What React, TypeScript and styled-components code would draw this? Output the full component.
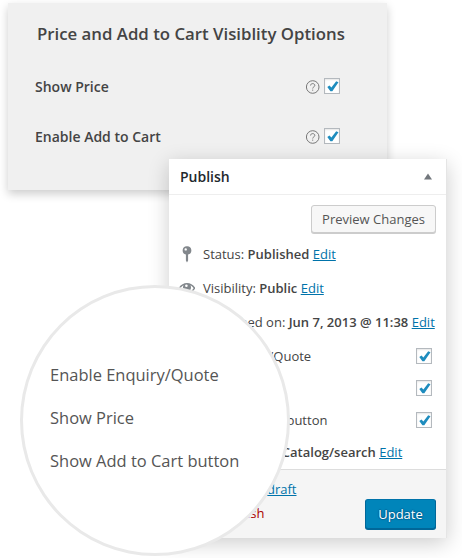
import React from 'react';
import styled, { createGlobalStyle } from 'styled-components';

const GlobalStyle = createGlobalStyle`
  * { box-sizing: border-box; }
  body {
    margin: 0;
    background: #fff;
    font-family: 'Open Sans', 'Noto Sans', sans-serif;
    font-size: 13px;
    color: #444;
  }
`;

const Stage = styled.main`
  position: relative;
  width: 462px;
  height: 558px;
  overflow: hidden;
  padding: 3px 0 0 8px;
`;

const OptionsCard = styled.section`
  width: 379px;
  height: 187px;
  padding: 19px 47px 0 27px;
  background: #f0f0f0;
  box-shadow: 0 4px 9px rgba(0, 0, 0, 0.2);
`;

const OptionsTitle = styled.h2`
  margin: 0 0 28px 2px;
  font-size: 16.8px;
  line-height: 24px;
  font-weight: 600;
  white-space: nowrap;
`;

const OptionRow = styled.div`
  display: flex;
  align-items: center;
  height: 24px;
  margin-bottom: 26px;
  font-size: 14px;
  font-weight: 600;
`;

const HelpIcon = styled.svg`
  width: 14px;
  height: 14px;
  margin: 1px 4px 0 auto;
`;

const Box = styled.span`
  display: flex;
  flex: none;
  width: 16px;
  height: 16px;
  border: 1px solid #b4b9be;
  background: #fff;
  box-shadow: inset 0 1px 2px rgba(0, 0, 0, 0.1);
`;

const PublishCard = styled.section`
  position: absolute;
  left: 169px;
  top: 159px;
  width: 278px;
  height: 379px;
  display: flex;
  flex-direction: column;
  background: #fff;
  border-right: 1px solid #e5e5e5;
  box-shadow: 0 5px 20px rgba(0, 0, 0, 0.2);
`;

const CardHeader = styled.header`
  display: flex;
  align-items: center;
  justify-content: space-between;
  height: 36px;
  padding: 0 14px 0 11px;
  border-bottom: 1px solid #eee;
  color: #23282d;
`;

const CardTitle = styled.h3`
  margin: 0;
  font-size: 14px;
  font-weight: 600;
`;

const Button = styled.button<{ $primary?: boolean }>`
  flex: none;
  align-self: flex-end;
  width: ${(p) => (p.$primary ? 71 : 125)}px;
  height: ${(p) => (p.$primary ? 30 : 28)}px;
  margin-bottom: 1px;
  padding: 0;
  font: inherit;
  border: 1px solid ${(p) => (p.$primary ? '#006799' : '#ccc')};
  border-top-color: ${(p) => (p.$primary ? '#0073aa' : '#ccc')};
  border-radius: 3px;
  color: ${(p) => (p.$primary ? '#fff' : '#555')};
  background: ${(p) => (p.$primary ? '#0085ba' : '#f7f7f7')};
  box-shadow: 0 1px 0 ${(p) => (p.$primary ? '#006799' : '#ccc')};
  text-shadow: ${(p) => (p.$primary ? '0 -1px 1px #006799, 1px 0 1px #006799, 0 1px 1px #006799, -1px 0 1px #006799' : 'none')};
`;

const CardBody = styled.div`
  display: flex;
  flex-direction: column;
  flex: 1;
  padding: 10px 10px 0 11px;
`;

const MetaList = styled.div`
  margin-top: 3px;
`;

const MetaRow = styled.div`
  display: flex;
  align-items: center;
  height: 34px;
  white-space: pre;
`;

const Toggles = styled.div`
  margin: 1px 0 0 -2px;
`;

const CheckRow = styled.label`
  display: flex;
  align-items: center;
  justify-content: space-between;
  height: 32px;
  padding-right: 4px;
`;

const Visibility = styled.div`
  height: 32px;
  margin-left: -2px;
  line-height: 32px;
  white-space: nowrap;
`;

const IconSlot = styled.svg`
  flex: none;
  width: 18px;
  height: 18px;
  margin: 0 7px 0 -2px;
  fill: #82878c;
`;

const Link = styled.a`
  color: #0073aa;
  text-decoration: underline;
`;

const TrashLink = styled(Link)`
  color: #a00;
  text-decoration: none;
`;

const Strong = styled.strong`
  font-weight: 600;
`;

const CardFooter = styled.footer`
  display: flex;
  justify-content: space-between;
  height: 69px;
  padding: 7px 10px 8px 9px;
  border-top: 1px solid #ddd;
  background: #f5f5f5;
`;

const FooterLinks = styled.div`
  display: flex;
  flex-direction: column;
  line-height: 24px;
`;

const Lens = styled.section`
  position: absolute;
  left: 20px;
  top: 285px;
  width: 270px;
  height: 271px;
  padding: 66px 0 0 27px;
  border: 3px solid #e9e9e9;
  border-radius: 50%;
  background: #fff;
`;

const LensItem = styled.div`
  height: 42.8px;
  line-height: 42px;
  font-size: 16.48px;
  color: #555;
  white-space: nowrap;
`;

const Checkbox = () => (
  <Box role="checkbox" aria-checked="true">
    <svg width="14" height="14" viewBox="0 0 14 14">
      <path d="M2.3 7.9 4.5 6.4 6.4 8.6 11.2 2.2 13.5 3.2 7.3 12.3H5.4Z" fill="#1e8cbe" />
    </svg>
  </Box>
);

const Help = () => (
  <HelpIcon viewBox="0 0 14 14" fill="none" stroke="#777" strokeWidth="1">
    <circle cx="6.7" cy="7" r="6.3" />
    <path d="M4.6 5.5C4.6 4.3 5.5 3.6 6.7 3.6s2.1.7 2.1 1.8c0 1.5-2.1 1.5-2.1 3.1M6.7 9.6v1.1" />
  </HelpIcon>
);

const Pin = () => (
  <IconSlot viewBox="0 0 18 18">
    <path
      fillRule="evenodd"
      d="M9 1.3a4.1 4.1 0 0 1 1.1 8.1V15.6L9 17.4 7.9 15.6V9.4A4.1 4.1 0 0 1 9 1.3ZM7.7 3.2a1.2 1.2 0 1 0 0 2.4 1.2 1.2 0 0 0 0-2.4Z"
    />
  </IconSlot>
);

const Eye = () => (
  <IconSlot viewBox="0 0 18 18">
    <path
      fillRule="evenodd"
      d="M1 8.6C3 5.6 5.8 4 9 4s6 1.6 8 4.6v1.2c-2 2.9-4.8 4.6-8 4.6S3 12.7 1 9.8ZM2.4 9.2C3.8 11.4 6 13 9 13s5.2-1.6 6.6-3.8c-.9-1.5-2-2.5-3.2-3 .4.6.6 1.3.6 2.1a4 4 0 0 1-8 0c0-.8.2-1.5.6-2.1-1.2.5-2.3 1.5-3.2 3ZM8.4 5.5a1.3 1.3 0 1 0 0 2.6 1.3 1.3 0 0 0 0-2.6Z"
    />
  </IconSlot>
);

const Calendar = () => (
  <IconSlot viewBox="0 0 18 18">
    <path fillRule="evenodd" d="M2 3h14v13H2ZM4 7v7h10V7ZM5 1h2v3H5Zm6 0h2v3h-2Z" />
  </IconSlot>
);

const options = ['Show Price', 'Enable Add to Cart'];
const toggles = ['Enable Enquiry/Quote', 'Show Price', 'Show Add to Cart button'];
const meta = [
  { label: 'Status: ', value: 'Published', Icon: Pin },
  { label: 'Visibility: ', value: 'Public', Icon: Eye },
  { label: 'Published on: ', value: 'Jun 7, 2013 @ 11:38', Icon: Calendar },
];

export default function App() {
  return (
    <>
      <GlobalStyle />
      <Stage>
        <OptionsCard>
          <OptionsTitle>Price and Add to Cart Visiblity Options</OptionsTitle>
          {options.map((label) => (
            <OptionRow key={label}>
              {label}
              <Help />
              <Checkbox />
            </OptionRow>
          ))}
        </OptionsCard>

        <PublishCard>
          <CardHeader>
            <CardTitle>Publish</CardTitle>
            <svg width="8" height="7" viewBox="0 0 8 7">
              <path d="M4 0.5 8 6.5H0Z" fill="#72777c" />
            </svg>
          </CardHeader>
          <CardBody>
            <Button>Preview Changes</Button>
            <MetaList>
              {meta.map(({ label, value, Icon }) => (
                <MetaRow key={label}>
                  <Icon />
                  <span>
                    {label}
                    <Strong>{value}</Strong> <Link>Edit</Link>
                  </span>
                </MetaRow>
              ))}
              <Toggles>
                {toggles.map((label) => (
                  <CheckRow key={label}>
                    {label}
                    <Checkbox />
                  </CheckRow>
                ))}
              </Toggles>
              <Visibility>
                Catalog visibility: <Strong>Catalog/search</Strong> <Link>Edit</Link>
              </Visibility>
            </MetaList>
          </CardBody>
          <CardFooter>
            <FooterLinks>
              <Link>Copy to a new draft</Link>
              <TrashLink>Move to Trash</TrashLink>
            </FooterLinks>
            <Button $primary>Update</Button>
          </CardFooter>
        </PublishCard>

        <Lens>
          {toggles.map((label) => (
            <LensItem key={label}>{label}</LensItem>
          ))}
        </Lens>
      </Stage>
    </>
  );
}
